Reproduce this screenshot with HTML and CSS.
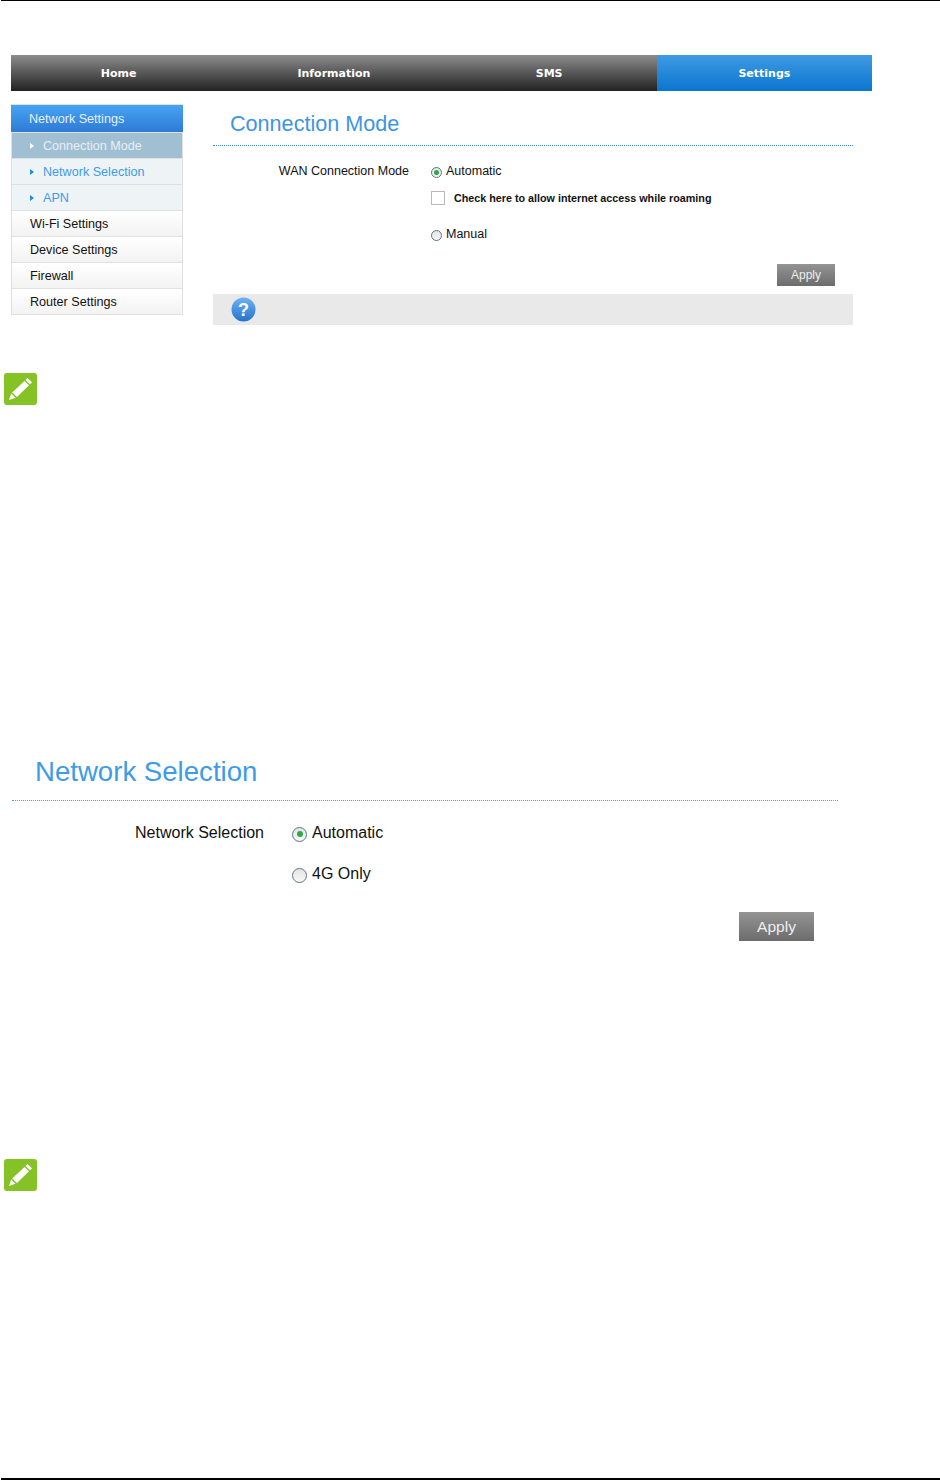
FILE: index.html
```html
<!DOCTYPE html>
<html lang="en">
<head>
  <meta charset="UTF-8" />
  <title>Connection Mode</title>
  <link rel="stylesheet" href="styles.css">
</head>
<body>

  <div class="rule-top"></div>

  <!-- Connection mode screen -->
  <section class="router">
    <nav class="tabs">
      <a href="#">Home</a>
      <a href="#">Information</a>
      <a href="#">SMS</a>
      <a href="#" class="active">Settings</a>
    </nav>

    <div class="panel">
      <aside class="side">
        <div class="side-head">Network Settings</div>
        <a href="#" class="sub current">Connection Mode</a>
        <a href="#" class="sub">Network Selection</a>
        <a href="#" class="sub">APN</a>
        <a href="#" class="item">Wi-Fi Settings</a>
        <a href="#" class="item">Device Settings</a>
        <a href="#" class="item">Firewall</a>
        <a href="#" class="item">Router Settings</a>
      </aside>

      <div class="main">
        <h2 class="title">Connection Mode</h2>
        <div class="form">
          <div class="label">WAN Connection Mode</div>
          <div class="options">
            <label class="opt"><span class="radio on"></span>Automatic</label>
            <label class="opt-check"><span class="check"></span><b>Check here to allow internet access while roaming</b></label>
            <label class="opt manual"><span class="radio"></span>Manual</label>
          </div>
        </div>
        <div class="actions"><button class="apply">Apply</button></div>
        <div class="help">
          <svg width="25" height="25" viewBox="0 0 25 25">
            <defs>
              <linearGradient id="helpfill" x1="0" y1="0" x2="0" y2="1">
                <stop offset="0" stop-color="#6fb2f2"/>
                <stop offset="1" stop-color="#2274cc"/>
              </linearGradient>
            </defs>
            <circle cx="12.5" cy="12.5" r="12" fill="url(#helpfill)"/>
            <text x="12.5" y="19" text-anchor="middle" class="help-mark">?</text>
          </svg>
        </div>
      </div>
    </div>
  </section>

  <div class="note first">
    <svg width="33" height="32" viewBox="0 0 33 32">
      <rect width="33" height="32" rx="3" fill="#85c226"/>
      <path d="M23.5 5l4.5 4.2-2 2-4.5-4.2zM20.5 8l4.5 4.2-12 11.8-4.8-4.4zM7.2 20.6l4.4 4.1-6.6 2.3z" fill="#fff"/>
    </svg>
  </div>

  <!-- Network selection screen -->
  <section class="select">
    <h2 class="select-title">Network Selection</h2>
    <div class="select-form">
      <div class="select-label">Network Selection</div>
      <div class="select-options">
        <label class="select-opt"><span class="radio big on"></span>Automatic</label>
        <label class="select-opt"><span class="radio big"></span>4G Only</label>
      </div>
    </div>
    <div class="select-actions"><button class="apply big">Apply</button></div>
  </section>

  <div class="note second">
    <svg width="33" height="32" viewBox="0 0 33 32">
      <rect width="33" height="32" rx="3" fill="#85c226"/>
      <path d="M23.5 5l4.5 4.2-2 2-4.5-4.2zM20.5 8l4.5 4.2-12 11.8-4.8-4.4zM7.2 20.6l4.4 4.1-6.6 2.3z" fill="#fff"/>
    </svg>
  </div>

  <div class="rule-bottom"></div>

</body>
</html>
```

FILE: styles.css
```css
html, body {
  margin: 0;
  padding: 0;
}
body {
  width: 940px;
  height: 1480px;
  overflow: hidden;
  background: #fff;
  color: #111;
  font-family: "Liberation Sans", Arial, sans-serif;
  font-size: 12.5px;
  display: flex;
  flex-direction: column;
}
a {
  text-decoration: none;
}
svg {
  display: block;
}
.rule-top {
  height: 1px;
  margin-left: 1px;
  background: #000;
}
.rule-bottom {
  height: 2px;
  margin: auto 0 0 1px;
  background: #000;
}

/* ----------- top screen ----------- */
.router {
  width: 861px;
  margin: 54px 0 0 11px;
}
.tabs {
  display: grid;
  grid-template-columns: repeat(4, 1fr);
  grid-template-rows: 36px;
  height: 36px;
  background: linear-gradient(#8c8c8c, #222);
}
.tabs a {
  height: 36px;
  color: #fff;
  font-family: "DejaVu Sans", Verdana, sans-serif;
  font-size: 11px;
  font-weight: bold;
  line-height: 37px;
  text-align: center;
}
.tabs a.active {
  background: linear-gradient(#3f9ae2, #0a76cf);
}
.panel {
  display: flex;
  margin-top: 13px;
}
.side {
  width: 172px;
  height: 211px;
  box-sizing: border-box;
  background: #e0e0e0;
  font-size: 12.6px;
  padding-top: 1px;
}
.side-head {
  height: 27px;
  margin-bottom: 1px;
  line-height: 28px;
  padding-left: 18px;
  color: #e4f0fb;
  background: linear-gradient(#46a4f0, #2f7ad6);
}
.sub, .item {
  display: block;
  box-sizing: border-box;
  height: 26px;
  line-height: 26px;
  margin: 0 1px;
  border-bottom: 1px solid #e0e0e0;
}
.sub {
  padding-left: 31px;
  position: relative;
  color: #3d9be8;
  background: #eef3f6;
}
.sub::before {
  content: "";
  position: absolute;
  left: 18px;
  top: 10px;
  border-left: 4px solid #1a8fe8;
  border-top: 3px solid transparent;
  border-bottom: 3px solid transparent;
}
.sub.current {
  color: #e6eff5;
  background: #a1bfd3;
}
.sub.current::before {
  border-left-color: #fff;
}
.item {
  padding-left: 18px;
  color: #111;
  background: linear-gradient(#fff, #f3f3f3);
}
.main {
  width: 640px;
  margin-left: 30px;
}
.title {
  margin: 0;
  height: 42px;
  padding: 8px 0 0 17px;
  box-sizing: border-box;
  border-bottom: 1px dotted #2f8fe0;
  color: #3d95e2;
  font-size: 21.6px;
  font-weight: normal;
  line-height: 24px;
}
.form {
  display: flex;
  margin-top: 17px;
}
.label {
  width: 196px;
  text-align: right;
  line-height: 16px;
}
.options {
  margin-left: 22px;
}
.opt {
  display: flex;
  align-items: center;
  height: 16px;
}
.opt-check {
  display: flex;
  align-items: center;
  height: 14px;
  margin-top: 12px;
  font-size: 10.75px;
}
.opt-check b {
  margin-left: 9px;
}
.manual {
  margin-top: 21px;
}
.radio {
  width: 11px;
  height: 11px;
  margin: 2px 4px 0 0;
  box-sizing: border-box;
  border: 1px solid #5b7487;
  border-radius: 50%;
  background: linear-gradient(#e4e4e4, #f8f8f8);
  display: flex;
  align-items: center;
  justify-content: center;
  flex: none;
}
.radio.on::after {
  content: "";
  width: 5px;
  height: 5px;
  border-radius: 50%;
  background: #2fa84a;
}
.check {
  width: 14px;
  height: 14px;
  box-sizing: border-box;
  border: 1px solid #b9b9b9;
  background: #fff;
  flex: none;
}
.actions {
  display: flex;
  justify-content: flex-end;
  padding-right: 18px;
  margin-top: 22px;
}
.apply {
  width: 58px;
  height: 22px;
  padding: 0;
  border: 0;
  color: #eee;
  background: linear-gradient(#949494, #6c6c6c);
  font-family: "Liberation Sans", Arial, sans-serif;
  font-size: 12px;
}
.help {
  height: 31px;
  margin-top: 8px;
  padding: 3px 0 0 18px;
  box-sizing: border-box;
  background: #e9e9e9;
}
.help-mark {
  fill: #fff;
  font-family: "Liberation Sans", Arial, sans-serif;
  font-size: 18px;
  font-weight: bold;
}

/* ----------- note icons ----------- */
.note {
  margin-left: 4px;
}
.note.first {
  margin-top: 48px;
}
.note.second {
  margin-top: 218px;
}

/* ----------- network selection screen ----------- */
.select {
  width: 826px;
  margin: 352px 0 0 12px;
}
.select-title {
  margin: 0;
  height: 44px;
  padding-left: 23px;
  box-sizing: border-box;
  border-bottom: 1px dotted #3f9ff0;
  color: #3d9be8;
  font-size: 27.6px;
  font-weight: normal;
  line-height: 29px;
}
.select-form {
  display: flex;
  margin-top: 22px;
  font-size: 16px;
}
.select-label {
  width: 252px;
  text-align: right;
  line-height: 20px;
}
.select-options {
  margin-left: 28px;
}
.select-opt {
  display: flex;
  align-items: center;
  height: 20px;
  margin-bottom: 21px;
}
.radio.big {
  width: 15px;
  height: 15px;
  margin-right: 5px;
}
.radio.big.on::after {
  width: 6px;
  height: 6px;
}
.select-actions {
  display: flex;
  justify-content: flex-end;
  padding-right: 24px;
  margin-top: 7px;
}
.apply.big {
  width: 75px;
  height: 29px;
  font-size: 15.5px;
}
```
